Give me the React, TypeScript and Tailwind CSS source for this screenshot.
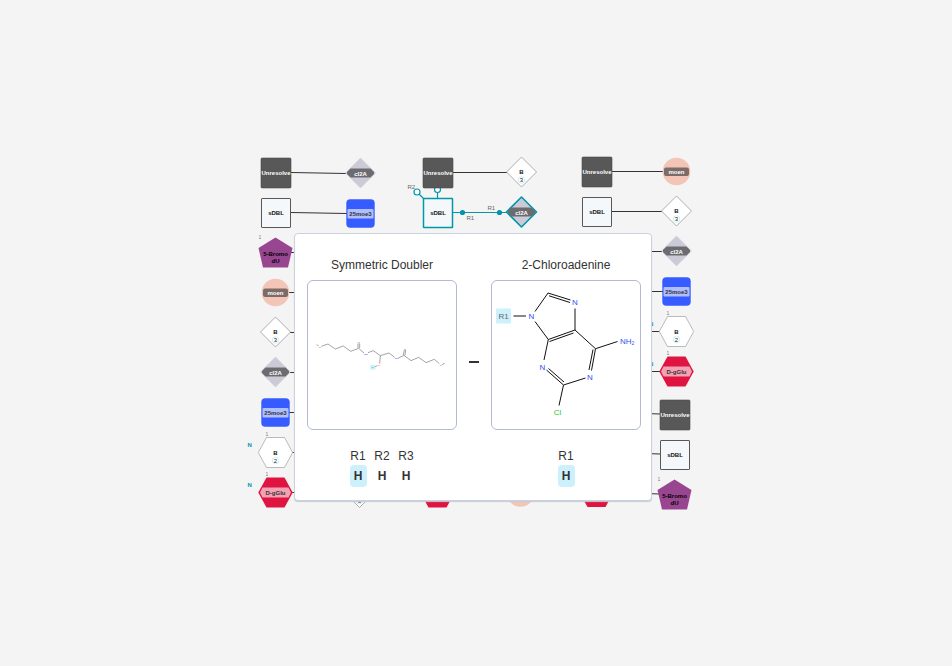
import type { ReactNode } from "react";

type Point = { x: number; y: number };
type Kind = "unresolved" | "doubler" | "adenine" | "moe" | "bromo" | "moen" | "branch" | "hexBranch" | "glucose";
type Monomer = Point & { kind: Kind; selected?: boolean };

const TEAL = "#0097a8";

const monomers: Monomer[] = [
  { kind: "unresolved", x: 276, y: 173 },
  { kind: "adenine", x: 360.5, y: 173 },
  { kind: "doubler", x: 276, y: 213 },
  { kind: "moe", x: 360.5, y: 213.5 },
  { kind: "bromo", x: 275.5, y: 252.5 },
  { kind: "moen", x: 275.5, y: 292.5 },
  { kind: "branch", x: 275.5, y: 332 },
  { kind: "adenine", x: 275.5, y: 372 },
  { kind: "moe", x: 275.5, y: 412.5 },
  { kind: "hexBranch", x: 275.5, y: 452.5 },
  { kind: "glucose", x: 275.5, y: 492.5 },
  { kind: "branch", x: 359.5, y: 492.5 },
  { kind: "unresolved", x: 438, y: 173 },
  { kind: "branch", x: 521.5, y: 172 },
  { kind: "doubler", x: 438, y: 213, selected: true },
  { kind: "adenine", x: 521.5, y: 212, selected: true },
  { kind: "glucose", x: 437.5, y: 492.5 },
  { kind: "moen", x: 520.5, y: 493 },
  { kind: "glucose", x: 596.5, y: 492 },
  { kind: "unresolved", x: 597, y: 172 },
  { kind: "moen", x: 676.5, y: 171.5 },
  { kind: "doubler", x: 597, y: 212 },
  { kind: "branch", x: 676.5, y: 211 },
  { kind: "adenine", x: 676.5, y: 251 },
  { kind: "moe", x: 676.5, y: 291.5 },
  { kind: "hexBranch", x: 676.5, y: 331.5 },
  { kind: "glucose", x: 676.5, y: 371.5 },
  { kind: "unresolved", x: 675, y: 415 },
  { kind: "doubler", x: 675, y: 455 },
  { kind: "bromo", x: 674.5, y: 494.5 },
];

const bonds = [
  [291, 172.5, 346, 173.5],
  [291, 212.5, 347, 213.5],
  [290, 252.5, 300, 252.5],
  [289, 292.5, 300, 292.5],
  [290, 332.5, 300, 332.5],
  [290, 372.5, 300, 372.5],
  [289, 412.5, 300, 412.5],
  [292, 452.5, 300, 452.5],
  [292, 492.5, 300, 492.5],
  [453, 172.5, 507, 172.5],
  [612, 171.5, 663, 171.5],
  [612, 211.5, 662, 211.5],
  [645, 251.5, 662, 251.5],
  [645, 291.5, 663, 291.5],
  [645, 331.5, 660, 331.5],
  [645, 371.5, 660, 371.5],
  [645, 413.5, 660, 414],
  [645, 453.5, 660, 454],
  [645, 493.5, 660, 494],
];

function Label({ children, fill = "#333333", y = 2 }: { children: ReactNode; fill?: string; y?: number }) {
  return (
    <text y={y} fill={fill} textAnchor="middle" className="text-[6px] font-bold">
      {children}
    </text>
  );
}

function BranchLabel({ count }: { count: number }) {
  return (
    <>
      <Label fill="#111">B</Label>
      <circle cy="8" r="3.3" fill="#fff" stroke="#c5ebf0" strokeWidth="0.8" />
      <text y="10" fill="#222" textAnchor="middle" className="text-[6px]">
        {count}
      </text>
    </>
  );
}

function Corner({ x = -10, y = -17 }: { x?: number; y?: number }) {
  return (
    <text x={x} y={y} fill="#7d7d7d" className="text-[5px]">
      1
    </text>
  );
}

function Shape({ kind, selected }: { kind: Kind; selected?: boolean }) {
  switch (kind) {
    case "unresolved":
      return (
        <>
          <rect x="-15" y="-15" width="30" height="30" rx="1" fill="#585858" stroke="#4a4a4a" strokeWidth="0.6" />
          <Label fill="#fff">Unresolve</Label>
        </>
      );
    case "doubler":
      return (
        <>
          <rect
            x="-14.5"
            y="-14.5"
            width="29"
            height="29"
            rx="0.5"
            fill="#f5f8fb"
            stroke={selected ? TEAL : "#585858"}
            strokeWidth={selected ? 1.5 : 1}
          />
          <Label fill="#111">sDBL</Label>
        </>
      );
    case "adenine":
      return (
        <>
          <path
            d="M0-15 15 0 0 15-15 0Z"
            fill="#cbcad6"
            stroke={selected ? TEAL : "#cbcad6"}
            strokeWidth={selected ? 1.6 : 0.5}
            strokeLinejoin="round"
          />
          <path d="M-10-4.5H10L13.5-1V1L10 4.5H-10L-13.5 1V-1Z" fill="#6c6c70" />
          <Label fill="#fff" y={3}>cl2A</Label>
        </>
      );
    case "moe":
      return (
        <>
          <rect x="-14.2" y="-14.2" width="28.4" height="28.4" rx="4" fill="#365cff" />
          <rect x="-13" y="-4.5" width="26" height="9.5" rx="1" fill="#afbeff" />
          <Label>25moe3</Label>
        </>
      );
    case "bromo":
      return (
        <>
          <path d="M0-15 17-4.5 12.5 15H-12.5L-17-4.5Z" fill="#994690" />
          <Label fill="#000" y={3}>5-Bromo</Label>
          <Label fill="#000" y={10}>dU</Label>
          <Corner x={-17} y={-14} />
        </>
      );
    case "moen":
      return (
        <>
          <circle r="13.8" fill="#f3c5b7" />
          <rect x="-12.5" y="-4" width="25" height="8.5" rx="2" fill="#7c6b66" />
          <Label fill="#fff" y={2}>moen</Label>
        </>
      );
    case "branch":
      return (
        <>
          <path d="M0-15 15 0 0 15-15 0Z" fill="#fff" stroke="#999" strokeWidth="0.8" />
          <BranchLabel count={3} />
        </>
      );
    case "hexBranch":
      return (
        <>
          <path d="M-9-15H9L17.2 0 9 15H-9L-17.2 0Z" fill="#fff" stroke="#a9a9a9" strokeWidth="0.8" />
          <BranchLabel count={2} />
          <Corner />
        </>
      );
    case "glucose":
      return (
        <>
          <path d="M-9-15H9L17.2 0 9 15H-9L-17.2 0Z" fill="#df1440" />
          <path d="M-13-5H13L15.500 0 13 5H-13L-15.500 0Z" fill="#f3a1b3" />
          <Label>D-gGlu</Label>
          <Corner />
        </>
      );
  }
}

function Canvas() {
  return (
    <svg viewBox="247 155 458 356" className="block w-full" role="img" aria-label="Macromolecule structure">
      <g stroke="#333" strokeWidth="1">
        {bonds.map(([x1, y1, x2, y2]) => (
          <line key={`${x1}-${y1}`} x1={x1} y1={y1} x2={x2} y2={y2} />
        ))}
      </g>
      <g stroke={TEAL} strokeWidth="1.2">
        <path d="M453 212.5H507M437.5 192V199M419 194 425 200" fill="none" />
        <circle cx="462.5" cy="212.5" r="2" fill={TEAL} />
        <circle cx="499.5" cy="212.5" r="2" fill={TEAL} />
        <circle cx="437.5" cy="189.5" r="3" fill="#fff" />
        <circle cx="417" cy="192" r="3" fill="#fff" />
      </g>
      {monomers.map((m) => (
        <g key={`${m.x}-${m.y}`} transform={`translate(${m.x} ${m.y})`}>
          <Shape kind={m.kind} selected={m.selected} />
        </g>
      ))}
      <g fill="#666" className="text-[6px]">
        <text x="407.5" y="189">R2</text>
        <text x="466.5" y="220">R1</text>
        <text x="487.5" y="210">R1</text>
      </g>
      <g fill={TEAL} className="text-[6px] font-bold">
        <text x="247.5" y="447">N</text>
        <text x="247.5" y="487">N</text>
        <text x="649" y="326">N</text>
        <text x="649" y="366">N</text>
      </g>
    </svg>
  );
}

function DoublerDrawing() {
  return (
    <svg viewBox="308 281 148 148" className="block w-full" role="img" aria-label="Symmetric Doubler structure">
      <g transform="translate(310 330) scale(.33333)">
        <rect x="181" y="105" width="15" height="14" fill="#c9f0fd" />
        <path
          d="M20 44 26 48M34 49 54 42 76 57 100 48 122 64 146 55 162 69M144 54V40M149 54V40M174 68 190 62 211 77 237 69 254 82M211 77 209 101M202 107 195 110M265 84 282 76 303 92 326 82 348 98 373 88 388 101M280 75 283 60M285 76 287 60M396 104 404 100"
          fill="none"
          stroke="#666"
          strokeWidth="1.800"
        />
        <g textAnchor="middle" className="text-[7px] font-bold">
          <g fill="#f22">
            <text x="30" y="54">O</text>
            <text x="147" y="38">O</text>
            <text x="207" y="109">O</text>
            <text x="285" y="59">O</text>
            <text x="392" y="108">O</text>
          </g>
          <g fill="#304ff7">
            <text x="168" y="76">NH</text>
            <text x="260" y="88">NH</text>
          </g>
          <text x="188" y="114" fill="#5fb9d4">R1</text>
        </g>
      </g>
    </svg>
  );
}

function AdenineDrawing() {
  return (
    <svg viewBox="492 281 148 148" className="block w-full" role="img" aria-label="2-Chloroadenine structure">
      <rect x="496" y="308.5" width="15" height="15" rx="1" fill="#cdf1fc" />
      <path
        d="M513.5 316H526M535 311.500 548 293 570.500 300M549 295.800 570 302.500M575 308.500V330L548.300 339.500 535 321.500M573.500 333 549.500 341.500M575 330 595.500 348.700 617.500 341.500M548.300 339.500 544 360M595.500 348.700 591.500 370.500M593 349.500 589 370M585.500 378 563.500 385 546.500 370M564 382 548.500 368.500M563.500 385 559 405.500"
        fill="none"
        stroke="#111"
        strokeWidth="1"
      />
      <g textAnchor="middle" className="text-[8px]">
        <text x="503.500" y="319" fill="#666">R1</text>
        <g fill="#304ff7">
          <text x="531.500" y="319">N</text>
          <text x="575" y="304.500">N</text>
          <text x="542.500" y="369.500">N</text>
          <text x="590" y="379.500">N</text>
          <text x="620" y="344" textAnchor="start">
            NH<tspan className="text-[5px]" dy="1">2</tspan>
          </text>
        </g>
        <text x="557.500" y="415" fill="#1fc91f">Cl</text>
      </g>
    </svg>
  );
}

function MonomerCard({ title, groups, children }: { title: string; groups: string[]; children: ReactNode }) {
  return (
    <section className="flex w-[150px] flex-col items-center">
      <h2 className="text-[12px] leading-4">{title}</h2>
      <div className="mt-[7px] w-full overflow-hidden rounded-md border border-[#b4b9d6]">{children}</div>
      <dl className="mt-[18px] flex gap-[6px]">
        {groups.map((group, i) => (
          <div key={group} className="flex w-[18px] flex-col items-center text-[12px]">
            <dt className="leading-4">{group}</dt>
            <dd className={`mt-px w-[17px] rounded text-center leading-[22px] font-bold ${i === 0 ? "bg-[#cdf1fc]" : ""}`}>
              H
            </dd>
          </div>
        ))}
      </dl>
    </section>
  );
}

export default function App() {
  return (
    <main className="flex min-h-screen items-center justify-center bg-[#f4f4f4] font-['Liberation_Sans',Arial,sans-serif] text-[#333]">
      <div className="relative w-[458px]">
        <Canvas />
        <div
          role="dialog"
          aria-label="Connection details"
          className="absolute top-[78px] left-[47px] flex items-start rounded border border-[#cad3dd] bg-white pt-[23px] pr-[10px] pb-[13px] pl-3 shadow-[0_1px_1px_#c5cad8]"
        >
          <MonomerCard title="Symmetric Doubler" groups={["R1", "R2", "R3"]}>
            <DoublerDrawing />
          </MonomerCard>
          <div className="mt-[104px] flex w-[34px] justify-center">
            <span className="h-[2px] w-[10px] bg-[#333]" />
          </div>
          <MonomerCard title="2-Chloroadenine" groups={["R1"]}>
            <AdenineDrawing />
          </MonomerCard>
        </div>
      </div>
    </main>
  );
}
